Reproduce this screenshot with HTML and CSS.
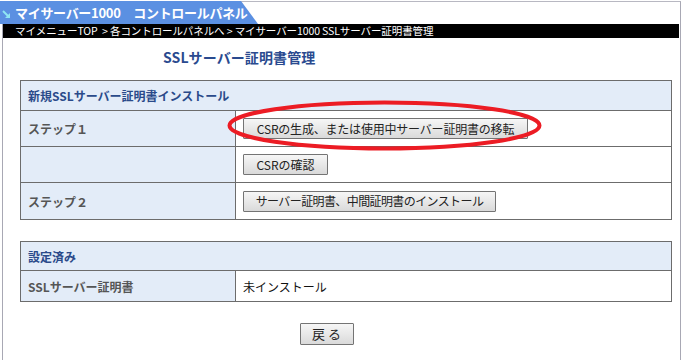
FILE: index.html
```html
<!DOCTYPE html>
<html lang="ja">
<head>
<meta charset="utf-8">
<title>SSLサーバー証明書管理</title>
<link rel="stylesheet" href="styles.css">
</head>
<body>
<div class="frame">
  <div class="topbar">
    <div class="tab">
      <svg class="tab-icon" width="9" height="10" viewBox="0 0 9 10"><path d="M1 2 L7 8" stroke="#8fe6f2" stroke-width="2" fill="none"/><path d="M3 9 L8 9 L8 4 Z" fill="#8fe6f2"/></svg>
      <span class="tab-text">マイサーバー1000　コントロールパネル</span>
    </div>
  </div>
  <div class="crumbs">マイメニューTOP&nbsp;&nbsp;&gt; 各コントロールパネルへ &gt; マイサーバー1000 SSLサーバー証明書管理</div>
  <main class="content">
    <h1 class="title">SSLサーバー証明書管理</h1>
    <table class="grid grid-install">
      <tr class="head-row"><th colspan="2">新規SSLサーバー証明書インストール</th></tr>
      <tr class="row"><td class="label">ステップ１</td><td class="value"><button class="btn btn-move">CSRの生成、または使用中サーバー証明書の移転</button></td></tr>
      <tr class="row"><td class="label"></td><td class="value"><button class="btn btn-csr">CSRの確認</button></td></tr>
      <tr class="row row-last"><td class="label">ステップ２</td><td class="value"><button class="btn btn-install">サーバー証明書、中間証明書のインストール</button></td></tr>
    </table>
    <table class="grid grid-status">
      <tr class="head-row head-short"><th colspan="2">設定済み</th></tr>
      <tr class="row row-short"><td class="label">SSLサーバー証明書</td><td class="value plain">未インストール</td></tr>
    </table>
    <div class="back"><button class="btn btn-back">戻 る</button></div>
  </main>
</div>
<svg class="annot" width="683" height="360" viewBox="0 0 683 360"><ellipse cx="384.5" cy="125.5" rx="155" ry="23" fill="none" stroke="#ec1c24" stroke-width="4"/></svg>
</body>
</html>
```
FILE: styles.css
```css
html, body {
  margin: 0;
  padding: 0;
  background: #fff;
}
body {
  width: 683px;
  height: 360px;
  overflow: hidden;
  position: relative;
  font-family: "Noto Sans CJK JP", "Noto Sans", sans-serif;
}
.frame {
  margin-left: 2px;
  width: 677px;
  height: 359px;
  border-left: 1px solid #a8a8b4;
  border-right: 1px solid #a8a8b4;
  border-top: 1px solid #b8b8c2;
  margin-top: 1px;
}
.topbar {
  height: 22px;
  margin-left: -3px;
  display: flex;
}
.tab {
  background: #5b90e2;
  height: 22px;
  width: 258px;
  flex: none;
  margin-top: -1px;
  padding-top: 1px;
  clip-path: polygon(0 0, 241px 0, 258px 100%, 0 100%);
  display: flex;
  align-items: center;
  color: #fff;
  font-weight: bold;
  font-size: 13px;
  letter-spacing: -0.3px;
  white-space: nowrap;
  box-sizing: content-box;
}
.tab-text {
  flex: none;
  line-height: 20px;
}
.tab-icon {
  margin: 2px 4px 0 2px;
  flex: none;
}
.crumbs {
  background: #000;
  color: #fff;
  height: 14px;
  line-height: 14px;
  font-size: 10.5px;
  letter-spacing: -0.1px;
  padding-left: 12px;
  white-space: nowrap;
  margin-right: 1px;
}
.content {
  padding: 0 7px 0 17px;
}
.title {
  margin: 0;
  height: 42px;
  line-height: 38px;
  padding-left: 143px;
  font-size: 14px;
  color: #2a4a8f;
  font-weight: bold;
  letter-spacing: 0.1px;
}
.grid {
  width: 652px;
  border-collapse: collapse;
  border: 1px solid #6c6c6c;
  font-size: 12px;
}
.grid th, .grid td {
  border: 1px solid #6c6c6c;
  padding: 0 0 0 7px;
}
.head-row th {
  background: #e3ecf8;
  height: 29px;
  text-align: left;
  color: #2a4a8a;
  font-weight: bold;
}
.head-short th {
  height: 28px;
}
.row td {
  height: 35px;
}
.row-last td {
  height: 36px;
}
.row-short td {
  height: 30px;
}
.label {
  width: 207px;
  background: #e3ecf8;
  color: #555;
  font-weight: bold;
}
.value {
  background: #fff;
}
.plain {
  color: #111;
}
.grid-status {
  margin-top: 21px;
}
.btn {
  font-family: "Noto Sans CJK JP", "Noto Sans", sans-serif;
  font-size: 12px;
  color: #222;
  height: 21px;
  padding: 0;
  border: 1px solid #747474;
  border-radius: 1px;
  background: linear-gradient(#f6f6f6, #dadada);
  display: block;
  white-space: nowrap;
  line-height: 18px;
}
.btn-move { width: 285px; letter-spacing: -0.2px; }
.btn-csr { width: 85px; }
.btn-install { width: 253px; letter-spacing: -0.6px; }
.back {
  display: flex;
  justify-content: center;
  padding-top: 21px;
  padding-right: 40px;
}
.btn-back {
  width: 54px;
  height: 22px;
  font-size: 13px;
}
.annot {
  position: absolute;
  left: 0;
  top: 0;
  pointer-events: none;
}
```
